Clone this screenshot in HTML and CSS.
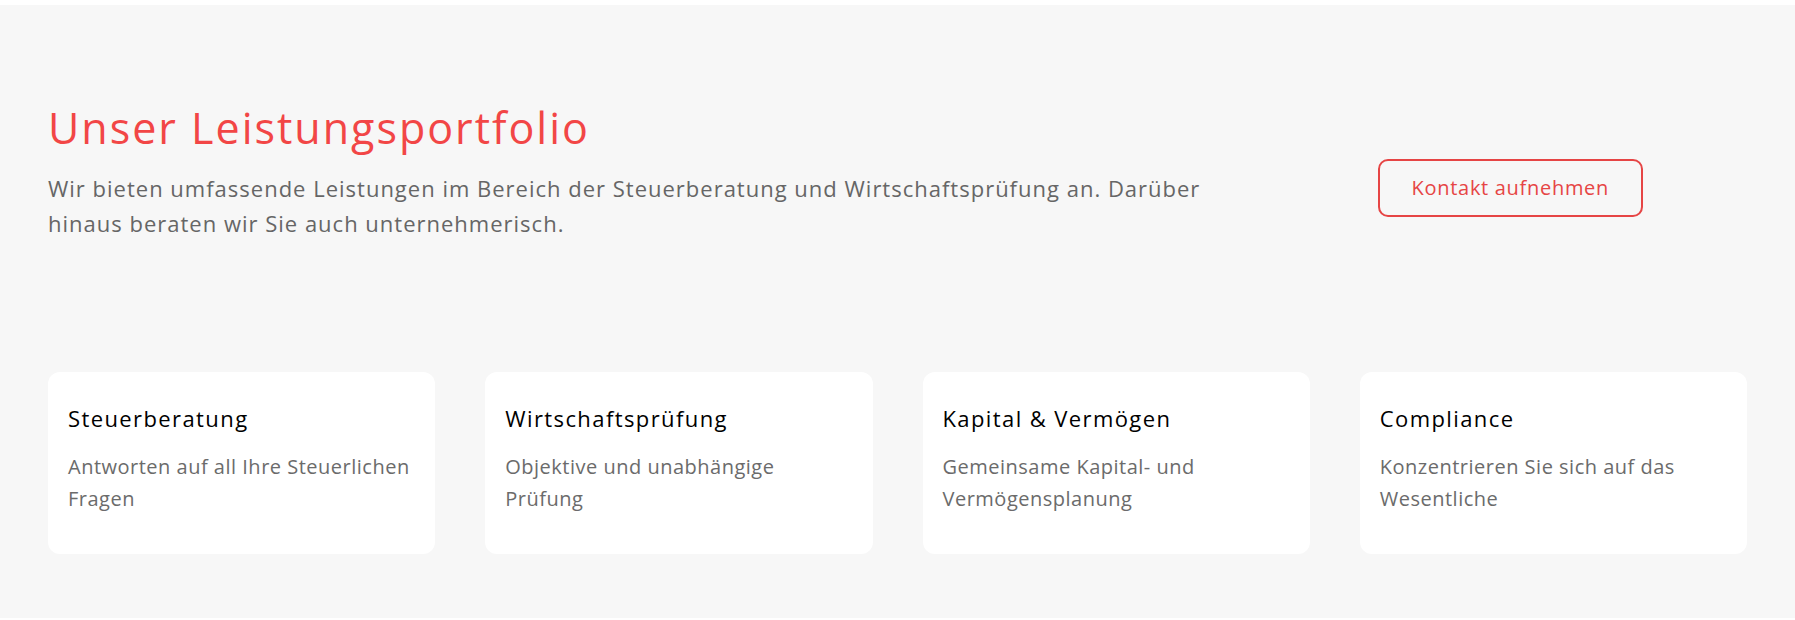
FILE: index.html
```html
<!DOCTYPE html>
<html lang="de">
<head>
    <meta charset="UTF-8">
    <meta name="viewport" content="width=device-width, initial-scale=1.0">
    <title>Leistungen</title>
    <link rel="stylesheet" href="styles.css">
</head>
<body>
    <section class="portfolio">
        <div class="intro">
            <div class="intro-text">
                <h2>Unser Leistungsportfolio</h2>
                <p>Wir bieten umfassende Leistungen im Bereich der Steuerberatung und Wirtschaftsprüfung an. Darüber hinaus beraten wir Sie auch unternehmerisch.</p>
            </div>
            <a class="btn-outline" href="#kontakt">Kontakt aufnehmen</a>
        </div>

        <div class="cards">
            <div class="card">
                <h3>Steuerberatung</h3>
                <p>Antworten auf all Ihre Steuerlichen Fragen</p>
            </div>
            <div class="card">
                <h3>Wirtschaftsprüfung</h3>
                <p>Objektive und unabhängige Prüfung</p>
            </div>
            <div class="card">
                <h3>Kapital &amp; Vermögen</h3>
                <p>Gemeinsame Kapital- und Vermögensplanung</p>
            </div>
            <div class="card">
                <h3>Compliance</h3>
                <p>Konzentrieren Sie sich auf das Wesentliche</p>
            </div>
        </div>
    </section>
</body>
</html>
```

FILE: styles.css
```css
body {
    margin: 0;
    background: #fff;
    font-family: "Open Sans", "DejaVu Sans", sans-serif;
    color: #666;
}
.portfolio {
    margin-top: 5px;
    height: 613px;
    box-sizing: border-box;
    padding: 97px 48px 0;
    background: #f7f7f7;
}
.intro {
    display: flex;
    align-items: center;
}
.intro-text {
    flex: 0 1 1160px;
}
.intro h2 {
    margin: 0 0 17px;
    font-size: 43px;
    line-height: 1.2;
    font-weight: 400;
    letter-spacing: 2px;
    color: #f24646;
}
.intro p {
    margin: 0 0 33px;
    font-size: 22px;
    line-height: 1.6;
    letter-spacing: 1px;
    color: #666;
}
.btn-outline {
    margin: 0 104px 0 auto;
    padding: 11px 32px;
    border: 2px solid #e64545;
    border-radius: 10px;
    font-size: 20px;
    line-height: 32px;
    letter-spacing: 0.7px;
    color: #e64545;
    text-decoration: none;
    white-space: nowrap;
}
.cards {
    display: grid;
    grid-template-columns: repeat(4, 1fr);
    gap: 50px;
    margin-top: 98px;
}
.card {
    padding: 29px 20px 39px;
    background: #fff;
    border-radius: 12px;
}
.card h3 {
    margin: 0 0 15px;
    font-size: 22px;
    line-height: 1.6;
    font-weight: 500;
    letter-spacing: 1.4px;
    color: #000;
}
.card p {
    margin: 0;
    font-size: 20px;
    line-height: 1.6;
    letter-spacing: 0.5px;
    color: #6b6b6b;
}
```
